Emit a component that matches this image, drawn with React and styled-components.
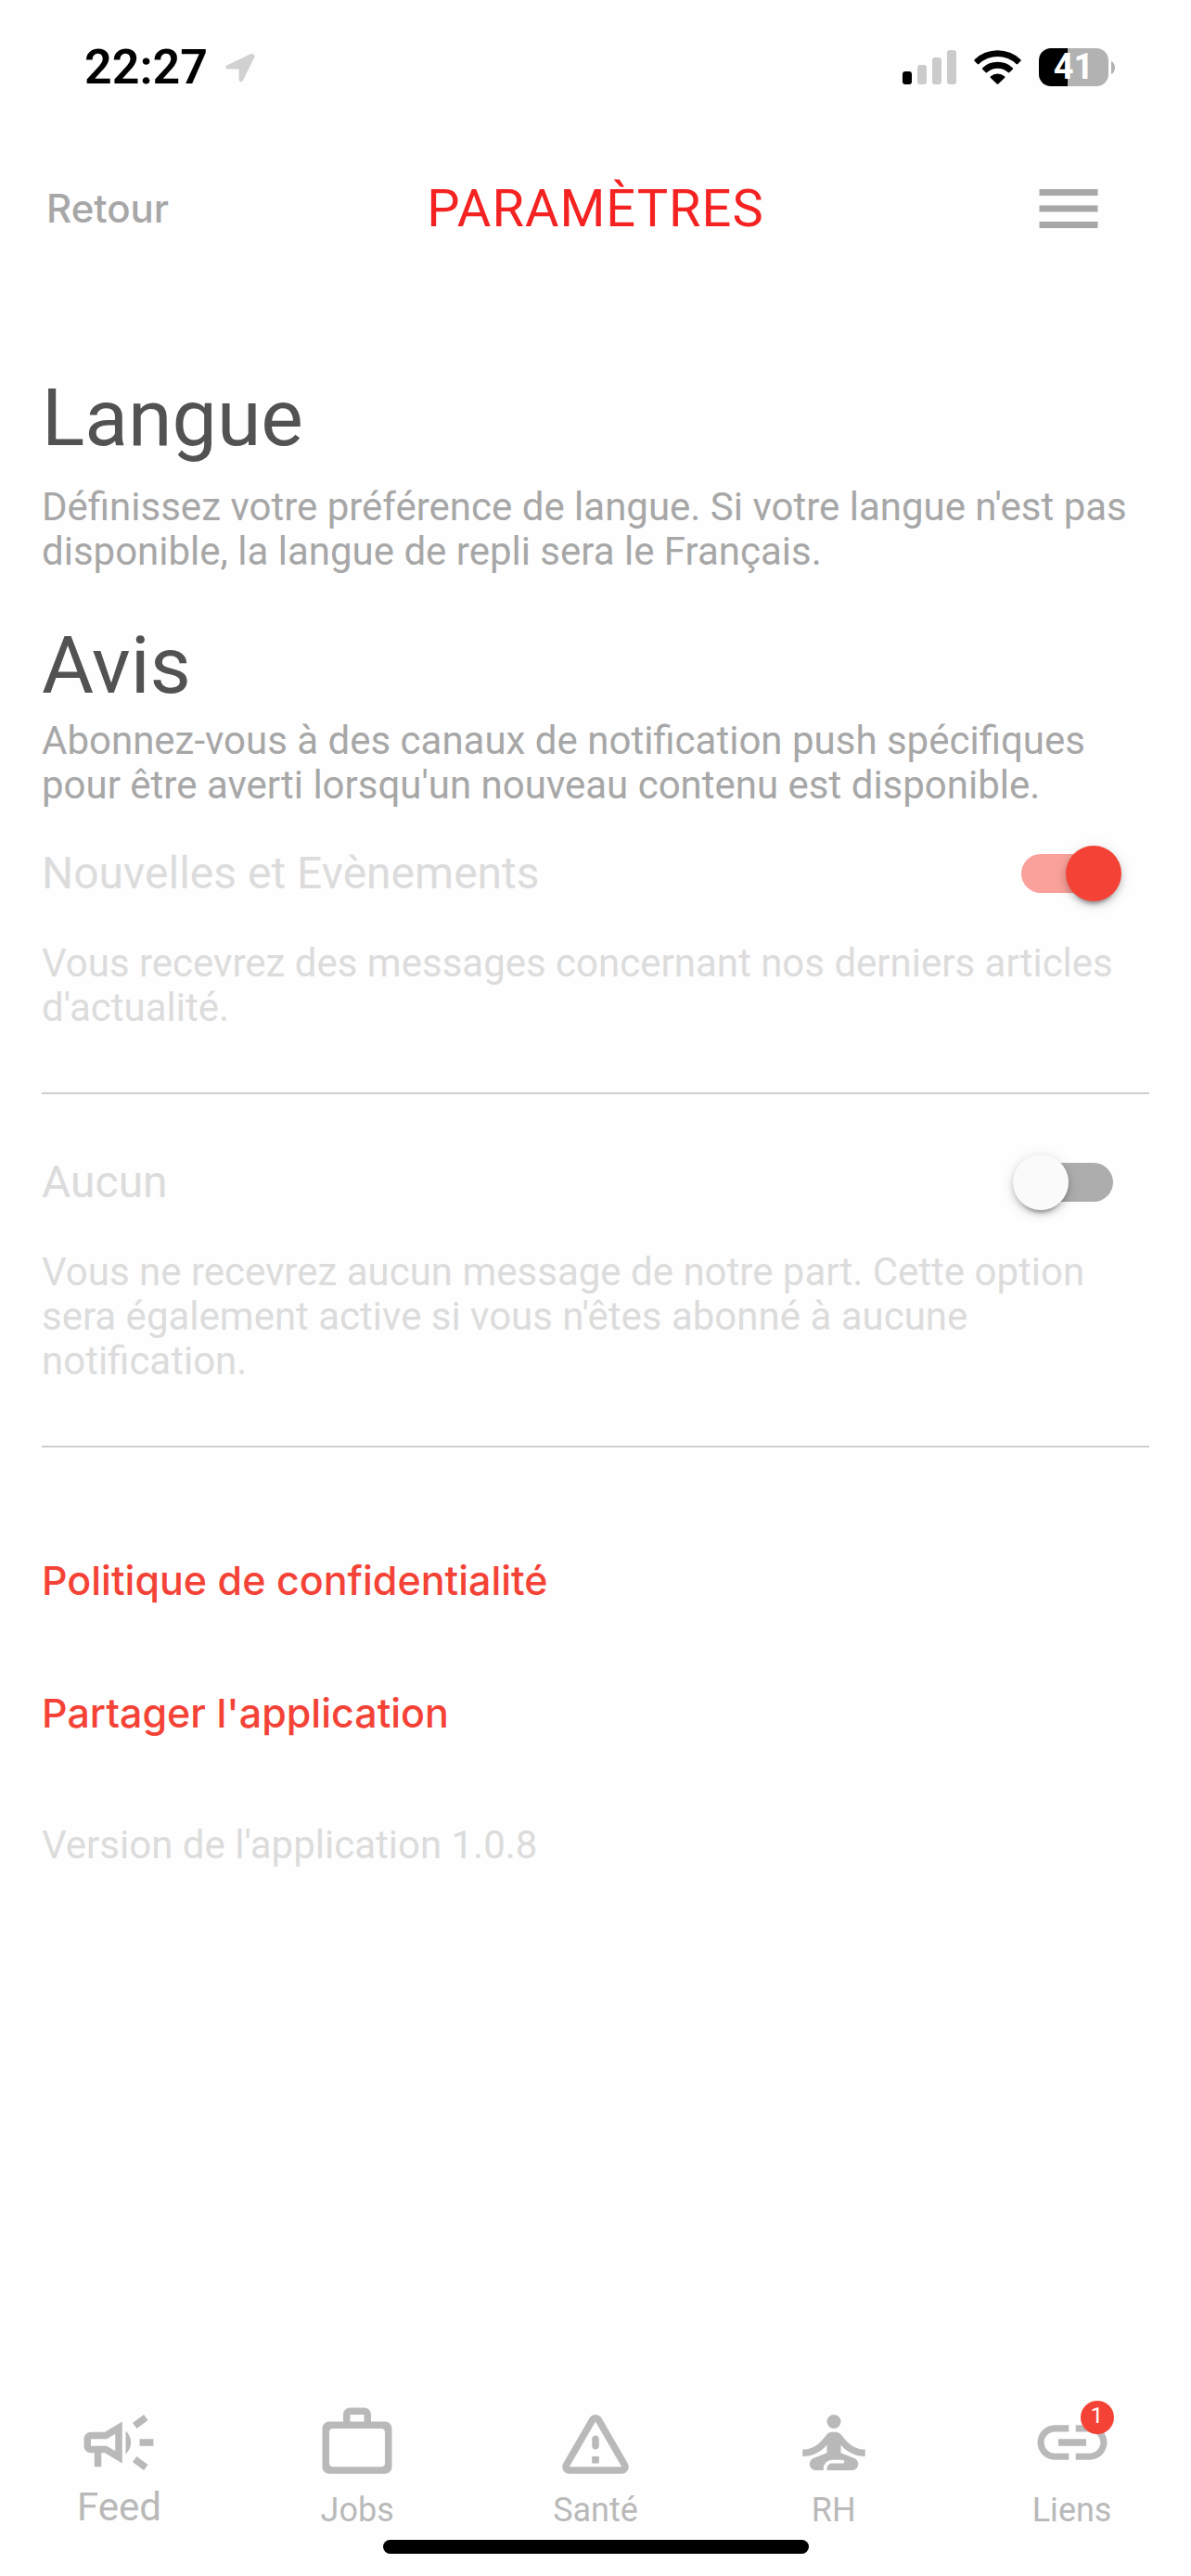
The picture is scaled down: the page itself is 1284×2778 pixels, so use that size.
import React, { useState } from "react";
import styled, { createGlobalStyle } from "styled-components";
import {
  MdMenu,
  MdOutlineCampaign,
  MdSelfImprovement,
  MdInsertLink,
} from "react-icons/md";

const GlobalStyle = createGlobalStyle`
  * {
    box-sizing: border-box;
  }
  body {
    margin: 0;
    background: #fefefe;
    font-family: Roboto, "Liberation Sans", sans-serif;
  }
`;

const Container = styled.div`
  min-height: 100vh;
  display: flex;
  flex-direction: column;
`;

const StatusBar = styled.div`
  height: 145px;
  padding: 0 82px 0 91px;
  display: flex;
  align-items: center;
  justify-content: space-between;
`;

const StatusGroup = styled.div`
  display: flex;
  align-items: center;
  gap: 19px;
`;

const Time = styled.span`
  font-size: 52px;
  line-height: 60px;
  font-weight: 600;
  color: #000;
`;

const Battery = styled.div`
  display: flex;
  align-items: center;
  gap: 3px;
`;

const BatteryBody = styled.div`
  width: 75px;
  height: 41px;
  border-radius: 13px;
  background: linear-gradient(to right, #000 41%, #b2b2b2 41%);
  color: #fff;
  font-size: 38px;
  line-height: 41px;
  font-weight: 700;
  text-align: center;
`;

const Header = styled.header`
  height: 160px;
  padding: 0 90px 0 50px;
  display: grid;
  grid-template-columns: 1fr auto 1fr;
  align-items: center;
`;

const BackButton = styled.button`
  justify-self: start;
  padding: 0;
  border: none;
  background: none;
  color: #a7a7a7;
  font: 500 42px/48px Inter, sans-serif;
  cursor: pointer;
`;

const Title = styled.h1`
  margin: 0 0 0 40px;
  color: #f52222;
  font-size: 56px;
  line-height: 64px;
  font-weight: 400;
  letter-spacing: 1px;
`;

const MenuButton = styled.button`
  justify-self: end;
  display: flex;
  padding: 0;
  border: none;
  background: none;
  color: #a7a7a7;
  font-size: 84px;
  cursor: pointer;
`;

const Main = styled.main`
  padding: 96px 45px 0;
`;

const Section = styled.section`
  margin-bottom: 49px;
`;

const Heading = styled.h2`
  margin: 0 0 ${({ $gap }) => $gap}px;
  color: #525252;
  font-size: 86px;
  line-height: 100px;
  font-weight: 400;
`;

const Text = styled.p`
  margin: 0;
  color: ${({ $muted }) => ($muted ? "#dcdcdc" : "#a7a7a7")};
  font-size: 42px;
  line-height: 48px;
`;

const Channel = styled.div`
  padding: 65px 0 67px;
  border-bottom: 2px solid #cfcfcf;

  &:first-of-type {
    padding-top: 41px;
  }
`;

const ChannelRow = styled.div`
  margin-bottom: 43px;
  padding-right: 39px;
  display: flex;
  align-items: center;
  justify-content: space-between;
`;

const ChannelLabel = styled.label`
  color: #dcdcdc;
  font-size: 48px;
  line-height: 60px;
`;

const Toggle = styled.input`
  appearance: none;
  position: relative;
  flex: none;
  width: 99px;
  height: 42px;
  margin: 0;
  border-radius: 21px;
  background: #adadad;
  cursor: pointer;

  &::after {
    content: "";
    position: absolute;
    top: -9px;
    left: -9px;
    width: 60px;
    height: 60px;
    border-radius: 50%;
    background: #fafafa;
    box-shadow: 0 9px 3px -6px rgba(0, 0, 0, 0.2),
      0 4px 6px 0 rgba(0, 0, 0, 0.18), 0 3px 15px 0 rgba(0, 0, 0, 0.12);
  }

  &:checked {
    background: #f9a19a;
  }

  &:checked::after {
    left: 48px;
    background: #f44336;
  }
`;

const Links = styled.div`
  padding-top: 70px;
  display: flex;
  flex-direction: column;
  align-items: flex-start;
  gap: 95px;
`;

const ActionLink = styled.a`
  padding: 0;
  border: none;
  background: none;
  color: #f44336;
  font: 500 43px/48px Inter, sans-serif;
  text-decoration: none;
  cursor: pointer;
`;

const Footer = styled.footer`
  margin-top: auto;
  padding-bottom: 24px;
`;

const TabBar = styled.nav`
  margin-bottom: 4px;
  display: grid;
  grid-template-columns: repeat(5, 1fr);
`;

const Tab = styled.a`
  display: flex;
  flex-direction: column;
  align-items: center;
  color: #b9b9b9;
  font-size: ${({ $active }) => ($active ? 42 : 36)}px;
  line-height: ${({ $active }) => ($active ? 50 : 56)}px;
  text-decoration: none;
`;

const TabIcon = styled.span`
  position: relative;
  width: 90px;
  height: 90px;

  svg {
    display: block;
    width: 100%;
    height: 100%;
  }
`;

const Badge = styled.span`
  position: absolute;
  top: 0;
  right: 0;
  width: 36px;
  height: 36px;
  border-radius: 50%;
  background: #f44336;
  color: #fff;
  font-size: 24px;
  line-height: 32px;
  text-align: center;
`;

const HomeIndicator = styled.div`
  width: 459px;
  height: 15px;
  margin: 0 auto;
  border-radius: 8px;
  background: #000;
`;

const LocationIcon = () => (
  <svg width="32" height="32" viewBox="0 0 32 32" fill="#d1d1d1">
    <path d="M27 1.3 2 13.2C-.6 14.5 0 17.6 2.8 17.6H13.5Q14.6 17.6 14.6 18.7V28.5C14.6 31.6 17.9 32 19 29.5L31.2 5C32.4 2.3 29.8 0 27 1.3Z" />
  </svg>
);

const SignalIcon = () => (
  <svg width="58" height="37" viewBox="0 0 58 37" fill="#cbcbcb">
    <rect y="23" width="10" height="14" rx="3" fill="#000" />
    <rect x="16" y="16" width="10" height="21" rx="3" />
    <rect x="32" y="8" width="10" height="29" rx="3" />
    <rect x="48" width="10" height="37" rx="3" />
  </svg>
);

const WifiIcon = () => (
  <svg width="51" height="37" viewBox="0 0 51 37">
    <path d="M.6 10.2a36 36 0 0 1 49.8 0q.8.8 0 1.6l-3.2 3.2q-.8.8-1.6 0a29 29 0 0 0-40.2 0q-.8.8-1.6 0L.6 11.8q-.8-.8 0-1.6Z" />
    <path d="M9.2 19.2a23.6 23.6 0 0 1 32.6 0q.8.8 0 1.6l-3.4 3.3q-.8.8-1.6 0a16.6 16.6 0 0 0-22.6 0q-.8.8-1.6 0l-3.4-3.3q-.8-.8 0-1.6Z" />
    <path d="M18 28.2a11.5 11.5 0 0 1 15 0q.9.9 0 1.8l-6.7 6.5q-.8.7-1.6 0L18 30q-.9-.9 0-1.8Z" />
  </svg>
);

const BatteryTip = () => (
  <svg width="4" height="14" viewBox="0 0 4 14">
    <path d="M0 0C2.5 1 4 4 4 7s-1.5 6-4 7Z" fill="#b2b2b2" />
  </svg>
);

const WorkIcon = () => (
  <svg viewBox="0 0 24 24" fill="currentColor">
    <path d="M14 6V4h-4v2h4zM4 9v9c0 .55.45 1 1 1h14c.55 0 1-.45 1-1V9c0-.55-.45-1-1-1H5c-.55 0-1 .45-1 1zm16-3c1.11 0 2 .89 2 2v11c0 1.11-.89 2-2 2H4c-1.11 0-2-.89-2-2V8c0-1.11.89-2 2-2h4V4c0-1.11.89-2 2-2h4c1.11 0 2 .89 2 2v2h4z" />
  </svg>
);

const WarningIcon = () => (
  <svg viewBox="0 0 24 24" fill="currentColor">
    <path d="M12 5.99L19.53 19H4.47L12 5.99M2.74 18c-.77 1.33.19 3 1.73 3h15.06c1.54 0 2.5-1.67 1.73-3L13.73 4.99c-.77-1.33-2.69-1.33-3.46 0L2.74 18zM11 11v2c0 .55.45 1 1 1s1-.45 1-1v-2c0-.55-.45-1-1-1s-1 .45-1 1zm0 5h2v2h-2z" />
  </svg>
);

const channels = [
  {
    id: "news",
    name: "Nouvelles et Evènements",
    description:
      "Vous recevrez des messages concernant nos derniers articles d'actualité.",
  },
  {
    id: "none",
    name: "Aucun",
    description:
      "Vous ne recevrez aucun message de notre part. Cette option sera également active si vous n'êtes abonné à aucune notification.",
  },
];

const tabs = [
  { name: "Feed", Icon: MdOutlineCampaign, active: true },
  { name: "Jobs", Icon: WorkIcon },
  { name: "Santé", Icon: WarningIcon },
  { name: "RH", Icon: MdSelfImprovement },
  { name: "Liens", Icon: MdInsertLink, badge: 1 },
];

const App = () => {
  const [selected, setSelected] = useState("news");

  return (
    <Container>
      <GlobalStyle />
      <StatusBar>
        <StatusGroup>
          <Time>22:27</Time>
          <LocationIcon />
        </StatusGroup>
        <StatusGroup>
          <SignalIcon />
          <WifiIcon />
          <Battery>
            <BatteryBody>41</BatteryBody>
            <BatteryTip />
          </Battery>
        </StatusGroup>
      </StatusBar>

      <Header>
        <BackButton type="button">Retour</BackButton>
        <Title>PARAMÈTRES</Title>
        <MenuButton type="button" aria-label="Menu">
          <MdMenu />
        </MenuButton>
      </Header>

      <Main>
        <Section>
          <Heading $gap={22}>Langue</Heading>
          <Text>
            Définissez votre préférence de langue. Si votre langue n'est pas
            disponible, la langue de repli sera le Français.
          </Text>
        </Section>

        <Section>
          <Heading $gap={7}>Avis</Heading>
          <Text>
            Abonnez-vous à des canaux de notification push spécifiques pour être
            averti lorsqu'un nouveau contenu est disponible.
          </Text>
          {channels.map((channel) => (
            <Channel key={channel.id}>
              <ChannelRow>
                <ChannelLabel htmlFor={channel.id}>{channel.name}</ChannelLabel>
                <Toggle
                  type="checkbox"
                  id={channel.id}
                  checked={selected === channel.id}
                  onChange={() => setSelected(channel.id)}
                />
              </ChannelRow>
              <Text $muted>{channel.description}</Text>
            </Channel>
          ))}
        </Section>

        <Links>
          <ActionLink href="#confidentialite">
            Politique de confidentialité
          </ActionLink>
          <ActionLink as="button" type="button">
            Partager l'application
          </ActionLink>
          <Text $muted>Version de l'application 1.0.8</Text>
        </Links>
      </Main>

      <Footer>
        <TabBar>
          {tabs.map(({ name, Icon, active, badge }) => (
            <Tab key={name} href={`#${name}`} $active={active}>
              <TabIcon>
                <Icon />
                {badge && <Badge>{badge}</Badge>}
              </TabIcon>
              {name}
            </Tab>
          ))}
        </TabBar>
        <HomeIndicator />
      </Footer>
    </Container>
  );
};

export default App;
